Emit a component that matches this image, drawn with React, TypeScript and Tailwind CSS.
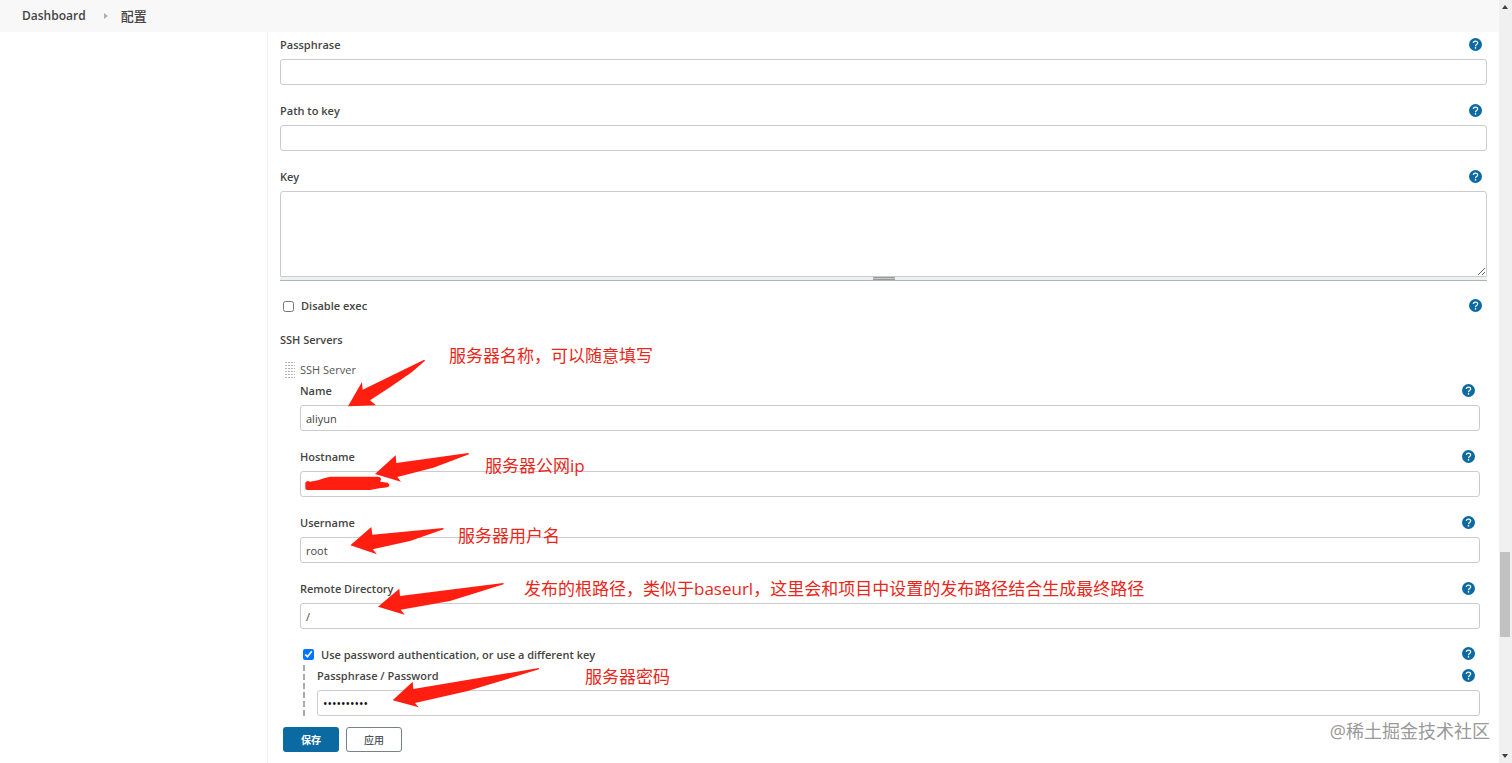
import React from "react";

const HelpButton = ({ topic }: { topic: string }) => (
  <button type="button" aria-label={`Help for ${topic}`} className="mr-[5px] mb-[2px] shrink-0">
    <svg width="13" height="13" viewBox="0 0 26 26" className="block">
      <circle cx="13" cy="13" r="13" fill="#0b6aa2" />
      <path
        d="M8.8 10.2C8.8 7.6 10.6 6 13 6s4.3 1.6 4.3 3.9c0 3.1-4.3 3.3-4.3 6.4"
        fill="none"
        stroke="#fff"
        strokeWidth="2.5"
      />
      <circle cx="13" cy="19.8" r="1.6" fill="#fff" />
    </svg>
  </button>
);

type FieldProps = {
  id: string;
  label: string;
  type?: string;
  value?: string;
  className?: string;
  children?: React.ReactNode;
};

const Field = ({ id, label, type = "text", value = "", className = "mb-[15px]", children }: FieldProps) => (
  <div className={`relative ${className}`}>
    <div className="mb-[3px] flex h-[22px] items-center justify-between">
      <label htmlFor={id} className="font-semibold">
        {label}
      </label>
      <HelpButton topic={label} />
    </div>
    <input
      id={id}
      type={type}
      defaultValue={value}
      className={`block h-[26px] w-full rounded-[3px] border border-[#cccccc] bg-white px-[5px] outline-none ${
        type === "password" ? "text-[12px] text-[#111111]" : "text-[#444444]"
      }`}
    />
    {children}
  </div>
);

type CheckProps = {
  id: string;
  label: string;
  checked?: boolean;
  className: string;
};

const Check = ({ id, label, checked = false, className }: CheckProps) => (
  <div className={`flex items-center justify-between ${className}`}>
    <div className="flex items-center gap-[7px] pl-[3px]">
      <input id={id} type="checkbox" defaultChecked={checked} className="size-[11px] accent-[#0075ff]" />
      <label htmlFor={id} className="font-semibold">
        {label}
      </label>
    </div>
    <HelpButton topic={label} />
  </div>
);

type ArrowProps = {
  viewBox: string;
  points: string;
  className: string;
};

const Arrow = ({ viewBox, points, className }: ArrowProps) => (
  <svg viewBox={viewBox} className={`pointer-events-none absolute ${className}`}>
    <polygon points={points} fill="#ff1e10" />
  </svg>
);

const Note = ({ className, children }: { className: string; children: React.ReactNode }) => (
  <span
    className={`pointer-events-none absolute text-[17px] leading-[22px] whitespace-nowrap text-[#e8271b] ${className}`}
  >
    {children}
  </span>
);

const Header = () => (
  <header className="flex h-8 items-center bg-[#f8f8f8] pl-[22px] text-[12px] text-[#444444]">
    <a href="#dashboard" className="font-semibold">
      Dashboard
    </a>
    <svg width="4" height="6" viewBox="0 0 4 6" className="mr-[13px] ml-[18px]">
      <path d="M0 0l4 3-4 3z" fill="#b0b0b0" />
    </svg>
    <a href="#config" className="text-[13px] font-medium">
      配置
    </a>
  </header>
);

const Scrollbar = () => (
  <div
    aria-hidden="true"
    className="flex w-[13px] shrink-0 flex-col items-center bg-[#f0f0f0] py-[5px] pr-[2px] pl-[1px]"
  >
    <svg width="6" height="4" viewBox="0 0 6 4">
      <path d="M3 0l3 4H0z" fill="#404040" />
    </svg>
    <div className="grow-[543]" />
    <div className="h-[85px] w-[10px] bg-[#c1c1c1]" />
    <div className="grow-[117]" />
    <svg width="6" height="4" viewBox="0 0 6 4">
      <path d="M0 0h6L3 4z" fill="#404040" />
    </svg>
  </div>
);

const SshServer = () => (
  <section className="mt-2 pr-[7px] pl-[20px]">
    <div className="relative flex h-[21px] items-center text-[#555555]">
      <svg width="10" height="17" className="absolute top-[3px] -left-[15px]">
        <defs>
          <pattern id="grip" width="3" height="3" patternUnits="userSpaceOnUse">
            <rect width="2" height="1" fill="#b4b4b4" />
          </pattern>
        </defs>
        <rect width="10" height="17" fill="url(#grip)" />
      </svg>
      SSH Server
    </div>

    <Field id="name" label="Name" value="aliyun">
      <Arrow
        viewBox="264 300 231 141"
        points="264,439 306,366 308,389 493,299 495,302 455,337 390,382 330,421 348,436"
        className="-top-[20px] left-[48px] w-[77px]"
      />
      <Note className="-top-[35px] left-[149px]">服务器名称，可以随意填写</Note>
    </Field>

    <Field id="hostname" label="Hostname">
      <svg viewBox="135 138 255 45" className="pointer-events-none absolute top-[30px] left-[5px] w-[85px]">
        <path
          d="M136 158q4-8 14-3l24-4q18-8 36-11h142q10 0 11 6l-2 9 22 3q6 4 5 10-2 5-26 6l-32 6H140q-5 0-4-8z"
          fill="#ff1e10"
        />
      </svg>
      <Arrow
        viewBox="345 69 285 87"
        points="345,132 407,76 409,99 625,69 627,73 520,113 412,141 423,155"
        className="top-[7px] left-[75px] w-[95px]"
      />
      <Note className="top-[9px] left-[185px]">服务器公网ip</Note>
    </Field>

    <Field id="username" label="Username" value="root">
      <Arrow
        viewBox="270 291 285 84"
        points="271,346 334,291 337,314 550,294 551,298 450,333 338,358 351,373"
        className="top-[15px] left-[50px] w-[95px]"
      />
      <Note className="top-[13px] left-[158px]">服务器用户名</Note>
    </Field>

    <Field id="remote-directory" label="Remote Directory" value="/">
      <Arrow
        viewBox="354 39 381 96"
        points="354,110 418,56 420,78 730,39 731,43 570,93 422,119 434,134"
        className="top-[5px] left-[78px] w-[127px]"
      />
      <Note className="top-0 left-[224px]">发布的根路径，类似于baseurl，这里会和项目中设置的发布路径结合生成最终路径</Note>
    </Field>

    <Check
      id="use-password"
      label="Use password authentication, or use a different key"
      checked
      className="h-[21px]"
    />
    <div className="ml-[3px] border-l-2 border-dashed border-[#aaaaaa] pl-[12px]">
      <Field id="password" label="Passphrase / Password" type="password" value="aliyun1234" className="">
        <Arrow
          viewBox="396 294 444 120"
          points="398,391 458,335 460,357 836,294 837,298 620,364 465,399 476,412"
          className="top-[3px] left-[75px] w-[148px]"
        />
        <Note className="top-[1px] left-[268px]">服务器密码</Note>
      </Field>
    </div>
  </section>
);

const App = () => {
  return (
    <div className="flex min-h-screen bg-white font-['Open_Sans','Noto_Sans_CJK_SC',sans-serif] text-[11px] leading-4 text-[#444444]">
      <div className="relative flex min-w-0 grow flex-col">
        <Header />
        <div className="flex grow">
          <aside className="w-[267px] shrink-0" />
          <form className="min-w-0 grow border-l border-[#eeeeee] px-3 pt-[2px] pb-[11px]">
            <Field id="passphrase" label="Passphrase" />
            <Field id="path-to-key" label="Path to key" />

            <div className="mb-[3px] flex h-[22px] items-center justify-between">
              <label htmlFor="key" className="font-semibold">
                Key
              </label>
              <HelpButton topic="Key" />
            </div>
            <textarea
              id="key"
              className="block h-[86px] w-full rounded-t-[3px] border border-[#cccccc] bg-white px-[5px] outline-none"
            />
            <div className="flex h-1 justify-center border-b border-[#aeb4b8] bg-[#eef0f1]">
              <div className="h-[3px] w-[22px] border-y border-[#999999] bg-[#c8c8c8]" />
            </div>

            <Check id="disable-exec" label="Disable exec" className="mt-[14px] h-[22px]" />
            <h2 className="mt-3 h-[22px] leading-[22px] font-semibold">SSH Servers</h2>
            <SshServer />

            <div className="mt-[11px] flex gap-[7px] pl-[3px]">
              <button type="submit" className="h-[25px] w-[56px] rounded-[3px] bg-[#0b6aa2] text-[10px] font-bold text-white">
                保存
              </button>
              <button
                type="button"
                className="h-[25px] w-[56px] rounded-[3px] border border-[#7a8087] bg-white text-[10px] font-medium text-[#4d545d]"
              >
                应用
              </button>
            </div>
          </form>
        </div>
        <span className="pointer-events-none absolute right-[9px] bottom-5 text-[18px] leading-6 text-[#999999]">
          @稀土掘金技术社区
        </span>
      </div>
      <Scrollbar />
    </div>
  );
};

export default App;
